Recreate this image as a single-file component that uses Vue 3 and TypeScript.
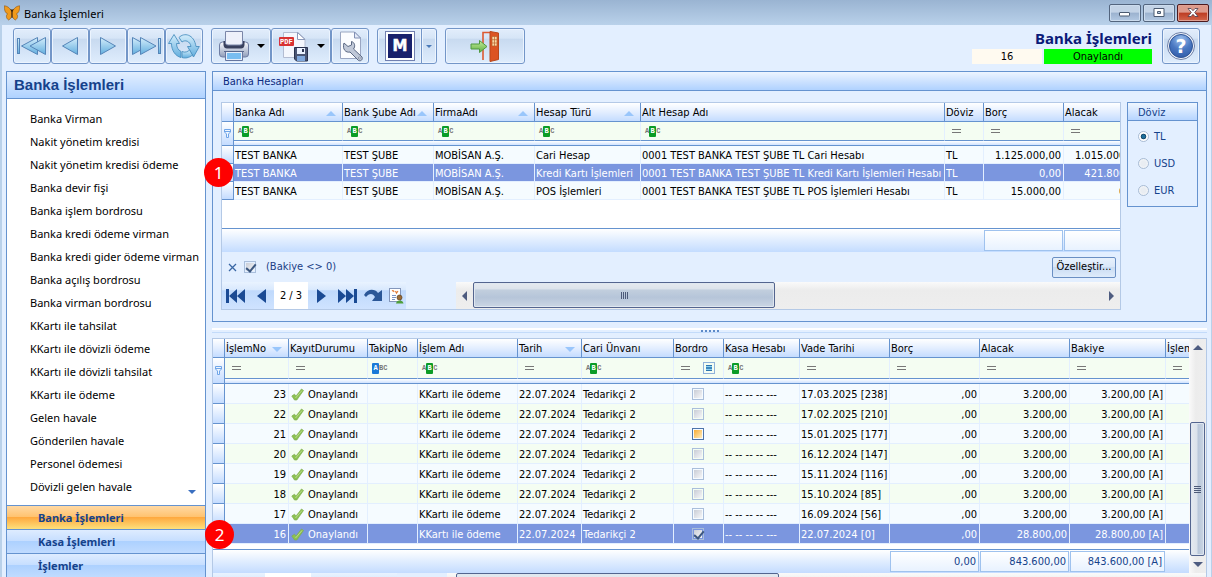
<script setup lang="ts">
import { ref } from 'vue'

type Sort = 'up' | 'down'
type Filter = 'abc' | 'starts' | 'eq'

interface Column {
  title: string
  width: number
  filter: Filter
  sort?: Sort
  numeric?: boolean
  check?: boolean
}

interface Movement {
  no: number
  due: string
  credit: string
  balance: string
}

const menuItems: string[] = [
  'Banka Virman',
  'Nakit yönetim kredisi',
  'Nakit yönetim kredisi ödeme',
  'Banka devir fişi',
  'Banka işlem bordrosu',
  'Banka kredi ödeme virman',
  'Banka kredi gider ödeme virman',
  'Banka açılış bordrosu',
  'Banka virman bordrosu',
  'KKartı ile tahsilat',
  'KKartı ile dövizli ödeme',
  'KKartı ile dövizli tahsilat',
  'KKartı ile ödeme',
  'Gelen havale',
  'Gönderilen havale',
  'Personel ödemesi',
  'Dövizli gelen havale',
]
const groups: string[] = ['Banka İşlemleri', 'Kasa İşlemleri', 'İşlemler']
const activeGroup = ref('Banka İşlemleri')

const accountColumns: Column[] = [
  { title: 'Banka Adı', width: 109, filter: 'abc', sort: 'up' },
  { title: 'Bank Şube Adı', width: 91, filter: 'abc', sort: 'up' },
  { title: 'FirmaAdı', width: 101, filter: 'abc', sort: 'up' },
  { title: 'Hesap Türü', width: 106, filter: 'abc', sort: 'up' },
  { title: 'Alt Hesap Adı', width: 304, filter: 'abc' },
  { title: 'Döviz', width: 39, filter: 'eq' },
  { title: 'Borç', width: 80, filter: 'eq', numeric: true },
  { title: 'Alacak', width: 80, filter: 'eq', numeric: true },
]
const accounts: string[][] = [
  ['TEST BANKA', 'TEST ŞUBE', 'MOBİSAN A.Ş.', 'Cari Hesap', '0001 TEST BANKA TEST ŞUBE TL Cari Hesabı', 'TL', '1.125.000,00', '1.015.000,00'],
  ['TEST BANKA', 'TEST ŞUBE', 'MOBİSAN A.Ş.', 'Kredi Kartı İşlemleri', '0001 TEST BANKA TEST ŞUBE TL Kredi Kartı İşlemleri Hesabı', 'TL', '0,00', '421.800,00'],
  ['TEST BANKA', 'TEST ŞUBE', 'MOBİSAN A.Ş.', 'POS İşlemleri', '0001 TEST BANKA TEST ŞUBE TL POS İşlemleri Hesabı', 'TL', '15.000,00', '0,00'],
]
const selectedAccount = ref(1)

const moveColumns: Column[] = [
  { title: 'İşlemNo', width: 64, filter: 'eq', sort: 'down' },
  { title: 'KayıtDurumu', width: 79, filter: 'eq' },
  { title: 'TakipNo', width: 50, filter: 'starts' },
  { title: 'İşlem Adı', width: 100, filter: 'abc' },
  { title: 'Tarih', width: 64, filter: 'eq', sort: 'down' },
  { title: 'Cari Ünvanı', width: 92, filter: 'abc' },
  { title: 'Bordro', width: 50, filter: 'eq', check: true },
  { title: 'Kasa Hesabı', width: 76, filter: 'abc' },
  { title: 'Vade Tarihi', width: 90, filter: 'eq' },
  { title: 'Borç', width: 90, filter: 'eq' },
  { title: 'Alacak', width: 90, filter: 'eq' },
  { title: 'Bakiye', width: 96, filter: 'eq' },
  { title: 'İşlem Türü', width: 80, filter: 'eq' },
]
const movements: Movement[] = [
  { no: 23, due: '17.03.2025 [238]', credit: '3.200,00', balance: '3.200,00 [A]' },
  { no: 22, due: '17.02.2025 [210]', credit: '3.200,00', balance: '3.200,00 [A]' },
  { no: 21, due: '15.01.2025 [177]', credit: '3.200,00', balance: '3.200,00 [A]' },
  { no: 20, due: '16.12.2024 [147]', credit: '3.200,00', balance: '3.200,00 [A]' },
  { no: 19, due: '15.11.2024 [116]', credit: '3.200,00', balance: '3.200,00 [A]' },
  { no: 18, due: '15.10.2024 [85]', credit: '3.200,00', balance: '3.200,00 [A]' },
  { no: 17, due: '16.09.2024 [56]', credit: '3.200,00', balance: '3.200,00 [A]' },
  { no: 16, due: '22.07.2024 [0]', credit: '28.800,00', balance: '28.800,00 [A]' },
]
const selectedMove = ref(16)

const currencies: string[] = ['TL', 'USD', 'EUR']
const currency = ref('TL')
</script>

<template>
  <div class="window">
    <svg class="defs" width="0" height="0" aria-hidden="true">
      <defs>
        <linearGradient id="gArrow" x1="0" y1="0" x2="0" y2="1">
          <stop offset="0" stop-color="#d4edfb" /><stop offset="1" stop-color="#62aede" />
        </linearGradient>
        <linearGradient id="gSteel" x1="0" y1="0" x2="0" y2="1">
          <stop offset="0" stop-color="#fbfcff" /><stop offset="1" stop-color="#8f9dba" />
        </linearGradient>
        <radialGradient id="gHelp" cx="0.5" cy="0.2" r="0.9">
          <stop offset="0" stop-color="#9cc0ee" /><stop offset="0.5" stop-color="#4a78c2" /><stop offset="1" stop-color="#2c56a4" />
        </radialGradient>
        <linearGradient id="gGreen" x1="0" y1="0" x2="0" y2="1">
          <stop offset="0" stop-color="#c5ec9a" /><stop offset="1" stop-color="#5fb043" />
        </linearGradient>
        <symbol id="tick" viewBox="0 0 13 13">
          <path d="M.8 8 L3.500 6.200 L5 8 L10.500 1 L12.500 2.500 L5.800 12 L3.500 12 Z" fill="#8cc152" stroke="#7fae50" stroke-width=".7" />
          <path d="M4.500 10 L11 2.500" stroke="#b9dc88" stroke-width="1" />
        </symbol>
        <symbol id="funnel" viewBox="0 0 9 11">
          <path d="M1.500 1.500 H7.500 V4 L5.500 6 V9.500 H3.500 V6 L1.500 4 Z M1.500 3.500 H7.500" fill="#eef6ff" stroke="#6fa5e8" />
        </symbol>
      </defs>
    </svg>

    <header class="titlebar">
      <svg width="16" height="16" viewBox="0 0 16 16" aria-hidden="true">
        <path d="M8 8 C7 4 4 1 .3 .8 C.3 5 1 8 3.600 8.800 C1.800 10 2 13.500 4.600 15 C7 14 7.800 11.500 8 9 Z" fill="#f09a1c" stroke="#7d4408" stroke-width=".5" />
        <path d="M8 8 C9 4 12 1 15.700 .8 C15.700 5 15 8 12.400 8.800 C14.200 10 14 13.500 11.400 15 C9 14 8.200 11.500 8 9 Z" fill="#f09a1c" stroke="#7d4408" stroke-width=".5" />
        <path d="M8 6 V13 M8 6.500 L6.800 4 M8 6.500 L9.200 4" stroke="#3d2306" stroke-width="1" fill="none" />
      </svg>
      <span class="caption">Banka İşlemleri</span>
      <div class="winbuttons">
        <button type="button" aria-label="Simge durumuna küçült">
          <svg width="12" height="9" viewBox="0 0 12 9"><rect x=".5" y="4.500" width="10" height="3.500" rx=".5" fill="#fff" stroke="#4a5a70" /></svg>
        </button>
        <button type="button" aria-label="Ekranı kapla">
          <svg width="12" height="9" viewBox="0 0 12 9"><path d="M1 .5 H11 V8.500 H1 Z M4.500 3.500 V5.500 H7.500 V3.500 Z" fill="#fff" fill-rule="evenodd" stroke="#4a5a70" /></svg>
        </button>
        <button type="button" class="close" aria-label="Kapat">
          <svg width="12" height="9" viewBox="0 0 12 9"><path d="M1 .5 H4 L6 2.700 L8 .5 H11 L7.700 4.500 L11 8.500 H8 L6 6.300 L4 8.500 H1 L4.300 4.500 Z" fill="#fff" stroke="#4b3a4a" stroke-width=".8" /></svg>
        </button>
      </div>
    </header>

    <div class="content">
      <div class="toolbar">
        <div class="btngroup">
          <button type="button" class="tool" aria-label="İlk kayıt">
            <svg width="30" height="20" viewBox="0 0 30 20" fill="url(#gArrow)" stroke="#5585b8">
              <rect x=".5" y="2.500" width="2" height="15" /><path d="M20.500 1.500 V18.500 L4.500 10 Z" /><path d="M28.500 1.500 V18.500 L13 10 Z" />
            </svg>
          </button>
          <button type="button" class="tool" aria-label="Önceki kayıt">
            <svg width="18" height="20" viewBox="0 0 18 20" fill="url(#gArrow)" stroke="#5585b8"><path d="M16.500 1.500 V18.500 L1.500 10 Z" /></svg>
          </button>
          <button type="button" class="tool" aria-label="Sonraki kayıt">
            <svg width="18" height="20" viewBox="0 0 18 20" fill="url(#gArrow)" stroke="#5585b8"><path d="M1.500 1.500 V18.500 L16.500 10 Z" /></svg>
          </button>
          <button type="button" class="tool" aria-label="Son kayıt">
            <svg width="30" height="20" viewBox="0 0 30 20" fill="url(#gArrow)" stroke="#5585b8">
              <path d="M1.500 1.500 V18.500 L17 10 Z" /><path d="M9.500 1.500 V18.500 L25 10 Z" /><rect x="27.500" y="2.500" width="2" height="15" />
            </svg>
          </button>
          <button type="button" class="tool" aria-label="Yenile">
            <svg width="32" height="26" viewBox="0 0 32 26" fill="url(#gArrow)" stroke="#4a90c0" stroke-width=".9">
              <path d="M6 1.500 L11.500 10.500 H8.500 C8.500 14 10 17 13 18.500 V24.500 C7 23 3.500 17 3.500 10.500 H.5 Z" />
              <path d="M11 4.500 C16 -.8 26 1 28 13.500 H31.300 L25.500 24 L19.500 13.500 H23 C22 8 17 6.500 14 9 Z" />
              <path d="M14 18.500 C17 20 20 18.500 21.500 17 L24.500 22 C21 25 17 25.500 14 24.500 Z" />
            </svg>
          </button>
        </div>

        <div class="btngroup">
          <button type="button" class="tool wide" aria-label="Yazdır">
            <svg width="32" height="30" viewBox="0 0 32 30">
              <rect x="1.500" y="11" width="29" height="15" rx="3" fill="url(#gSteel)" stroke="#6f7ea4" />
              <path d="M5.500 10 H26.500 V14 Q26 17.500 23 17.500 H9 Q6 17.500 5.500 14 Z" fill="#39415e" />
              <path d="M7.500 .5 H24.500 V12 Q24.500 14 22 14 H10 Q7.500 14 7.500 12 Z" fill="#eef1fa" stroke="#7a86a8" />
              <path d="M6 20.500 H26" stroke="#59688e" />
              <rect x="8.500" y="21.500" width="15" height="7" fill="#79bdf0" stroke="#e6eefa" />
              <path d="M7.500 21 V29.500 H24.500 V21" fill="none" stroke="#6676a0" />
            </svg>
            <i class="drop"></i>
          </button>
          <button type="button" class="tool wide" aria-label="PDF olarak kaydet">
            <svg width="32" height="32" viewBox="0 0 32 32">
              <path d="M5.500 2.500 H20 L27 9 V27.500 H5.500 Z" fill="#f4f7fd" stroke="#b3bdd2" /><path d="M19.500 2.500 V9.500 H27 Z" fill="#fff" stroke="#8a99ba" />
              <rect x="1" y="7" width="15" height="9" rx="1" fill="#d83232" /><text x="2" y="14" font-size="7" font-weight="700" fill="#fff" class="mono">PDF</text>
              <path d="M16.500 17.500 H29.500 V31 H18.500 L16.500 29 Z" fill="#4a5674" stroke="#29334f" /><rect x="19" y="18" width="8" height="6" fill="#eaf2ff" /><rect x="19" y="26" width="8" height="5" fill="#7fa8dd" /><rect x="24" y="19" width="2" height="3" fill="#29334f" />
            </svg>
            <i class="drop"></i>
          </button>
          <button type="button" class="tool" aria-label="Tasarım">
            <svg width="26" height="32" viewBox="0 0 26 32">
              <path d="M3.500 2 H17.500 L23.500 8 V28.500 H3.500 Z" fill="#fbfcff" stroke="#9aa6c2" /><path d="M17.500 2 V8 H23.500 Z" fill="#e4eaf8" stroke="#8290b4" />
              <path d="M7 13 L11 16.500 L14.500 15 L14.500 11.500 C18 12.500 18.500 16.500 16.500 19 L25 27 C26 29.500 24 31.500 21.500 30.500 L13 22 C9 23 5 19.500 7 13 Z" fill="#c0c8d8" stroke="#5b6883" />
              <circle cx="22.300" cy="28" r="1" fill="#fff" stroke="#5b6883" stroke-width=".6" />
            </svg>
          </button>
        </div>

        <div class="btngroup">
          <button type="button" class="tool brand" aria-label="M">
            <svg width="30" height="30" viewBox="0 0 30 30"><rect x=".5" y=".5" width="29" height="29" fill="#fff" stroke="#7180b0" /><rect x="3" y="3" width="24" height="24" fill="#19216c" /><text x="15" y="20" text-anchor="middle" font-size="15" font-weight="700" fill="#fff" stroke="#fff" stroke-width=".5" class="sansbold">M</text></svg>
          </button>
          <button type="button" class="tool slim" aria-label="Seçenekler"><i class="drop small"></i></button>
        </div>

        <div class="btngroup">
          <button type="button" class="tool exit" aria-label="Çıkış">
            <svg width="30" height="32" viewBox="0 0 30 32">
              <path d="M13 30 V2.500 H22" fill="none" stroke="#dc5a33" stroke-width="1.600" />
              <path d="M20 1.500 L28.500 3 V29.500 L20 31.500 Z" fill="#dc5423" stroke="#b9471c" />
              <path d="M22 6.500 H27 V16 H22 Z M24.500 6.500 V16 M22 9.700 H27 M22 13 H27" fill="#fbd9a6" stroke="#b9622c" stroke-width=".7" />
              <path d="M1 14 H9.500 V10.500 L17 16.500 L9.500 22.500 V19 H1 Z" fill="url(#gGreen)" stroke="#4f9a40" />
            </svg>
          </button>
        </div>

        <div class="status">
          <strong>Banka İşlemleri</strong>
          <div class="fields">
            <input class="recno" type="text" value="16" aria-label="Kayıt no" readonly />
            <output class="state">Onaylandı</output>
          </div>
        </div>
        <button type="button" class="tool help" aria-label="Yardım">
          <svg width="30" height="30" viewBox="0 0 30 30">
            <circle cx="15" cy="15" r="13.500" fill="#f2f5fb" stroke="#6d7fa6" /><circle cx="15" cy="15" r="11.500" fill="url(#gHelp)" stroke="#2f5596" />
            <text x="15" y="22" text-anchor="middle" font-size="19" font-weight="700" fill="#fff" class="sansbold">?</text>
          </svg>
        </button>
      </div>

      <div class="body">
        <aside class="sidebar">
          <h2>Banka İşlemleri</h2>
          <nav>
            <a v-for="item in menuItems" :key="item" href="#">{{ item }}</a>
            <i class="more"></i>
          </nav>
          <button
            v-for="group in groups" :key="group" type="button" class="group"
            :class="{ active: group === activeGroup }" @click="activeGroup = group"
          >{{ group }}</button>
        </aside>

        <main>
          <section class="panel">
            <h3>Banka Hesapları</h3>
            <div class="panelbody">
              <div class="gridwrap">
                <div class="grid">
                  <div class="clip">
                    <table class="accounts">
                      <colgroup><col class="ind" /><col v-for="c in accountColumns" :key="c.title" :style="{ width: c.width + 'px' }" /></colgroup>
                      <thead>
                        <tr>
                          <td class="mark"></td>
                          <th v-for="c in accountColumns" :key="c.title" scope="col">
                            <div class="head"><span>{{ c.title }}</span><i v-if="c.sort" :class="['sort', c.sort]"></i></div>
                          </th>
                        </tr>
                        <tr class="filter">
                          <td class="mark" rowspan="2"><svg width="9" height="11"><use href="#funnel" /></svg></td>
                          <td v-for="c in accountColumns" :key="c.title">
                            <span v-if="c.filter === 'abc'" class="abc"><b>A</b><b class="green">B</b><b>C</b></span>
                            <i v-else class="eq"></i>
                          </td>
                        </tr>
                        <tr class="band"><td :colspan="accountColumns.length"></td></tr>
                      </thead>
                      <tbody>
                        <tr v-for="(row, r) in accounts" :key="r" :class="{ selected: r === selectedAccount }" @click="selectedAccount = r">
                          <td class="mark"></td>
                          <td v-for="(cell, c) in row" :key="c" :class="{ num: accountColumns[c].numeric }">{{ cell }}</td>
                        </tr>
                      </tbody>
                    </table>
                    <div class="blank tall"></div>
                    <table class="foot">
                      <colgroup><col class="ind" /><col v-for="c in accountColumns" :key="c.title" :style="{ width: c.width + 'px' }" /></colgroup>
                      <tbody><tr><td colspan="7"></td><td><div class="sum"></div></td><td><div class="sum"></div></td></tr></tbody>
                    </table>
                  </div>
                  <div class="filterbar">
                    <button type="button" class="plain" aria-label="Filtreyi kaldır"><svg width="9" height="9" viewBox="0 0 9 9"><path d="M1 1 L8 8 M8 1 L1 8" stroke="#3a67a5" stroke-width="1.300" /></svg></button>
                    <label><input type="checkbox" class="box" checked /> <span>(Bakiye &lt;&gt; 0)</span></label>
                    <button type="button" class="customize">Özelleştir...</button>
                  </div>
                  <div class="pager">
                    <div class="pagebtns">
                      <button type="button" class="plain w26" aria-label="İlk"><svg width="19" height="14" viewBox="0 0 19 14"><path d="M0 0 H3 V14 H0 Z M11 0 V14 L3 7 Z M19 0 V14 L11 7 Z" fill="#1a4a94" /></svg></button>
                      <button type="button" class="plain w26" aria-label="Önceki"><svg width="9" height="14" viewBox="0 0 9 14"><path d="M9 0 V14 L0 7 Z" fill="#1a4a94" /></svg></button>
                      <output>2 / 3</output>
                      <button type="button" class="plain w26" aria-label="Sonraki"><svg width="9" height="14" viewBox="0 0 9 14"><path d="M0 0 V14 L9 7 Z" fill="#1a4a94" /></svg></button>
                      <button type="button" class="plain w26" aria-label="Son"><svg width="19" height="14" viewBox="0 0 19 14"><path d="M0 0 V14 L8 7 Z M8 0 V14 L16 7 Z M16 0 H19 V14 H16 Z" fill="#1a4a94" /></svg></button>
                      <button type="button" class="plain w26" aria-label="Git"><svg width="19" height="13" viewBox="0 0 19 13"><path d="M0 6 C4 -1 11 0 14 4 L18 1 V12 H8 L11 8 C9 4 5 4 2 8 Z" fill="#2b5797" /></svg></button>
                      <button type="button" class="plain w20" aria-label="Kart"><svg width="15" height="16" viewBox="0 0 15 16"><rect x=".5" y=".5" width="11" height="13" fill="#fff" stroke="#8497bb" /><path d="M3 3 Q4.500 2 5 4 M6.500 3 L7.500 5 L9 3" stroke="#e07834" fill="none" stroke-width="1.200" /><path d="M3 7.500 H7 M3 9.500 H7 M3 11.500 H6" stroke="#7b93c4" /><circle cx="10.500" cy="9.500" r="2.500" fill="#9a6a35" stroke="#5c3f20" stroke-width=".7" /><path d="M7 15.500 Q7.500 12.500 10.500 12.500 Q14 12.500 14.500 15.500 Z" fill="#4f9f3b" /></svg></button>
                    </div>
                    <div class="hscroll">
                      <button type="button" class="plain" aria-label="Sola kaydır"><i class="tri left"></i></button>
                      <div class="track"><div class="hthumb"><i></i><i></i><i></i><i></i></div></div>
                      <button type="button" class="plain" aria-label="Sağa kaydır"><i class="tri right"></i></button>
                    </div>
                  </div>
                </div>
                <span class="step one">1</span>
              </div>

              <fieldset class="currency">
                <legend>Döviz</legend>
                <label v-for="c in currencies" :key="c"><input v-model="currency" type="radio" name="currency" :value="c" /> {{ c }}</label>
              </fieldset>
            </div>
          </section>

          <div class="splitter"><i v-for="n in 5" :key="n"></i></div>

          <div class="gridwrap lower">
            <div class="grid moves-grid">
              <div class="scrollrow">
                <div class="clip">
                  <table class="moves">
                    <colgroup><col class="ind" /><col v-for="c in moveColumns" :key="c.title" :style="{ width: c.width + 'px' }" /></colgroup>
                    <thead>
                      <tr>
                        <td class="mark"></td>
                        <th v-for="c in moveColumns" :key="c.title" scope="col">
                          <div class="head"><span>{{ c.title }}</span><i v-if="c.sort" :class="['sort', c.sort]"></i></div>
                        </th>
                      </tr>
                      <tr class="filter">
                        <td class="mark" rowspan="2"><svg width="9" height="11"><use href="#funnel" /></svg></td>
                        <td v-for="c in moveColumns" :key="c.title">
                          <div class="filtercell">
                            <span v-if="c.filter === 'abc'" class="abc"><b>A</b><b class="green">B</b><b>C</b></span>
                            <span v-else-if="c.filter === 'starts'" class="abc"><b class="blue">A</b><b>B</b><b>C</b></span>
                            <i v-else class="eq"></i>
                            <input v-if="c.check" type="checkbox" class="box mixed" aria-label="Bordro filtresi" />
                          </div>
                        </td>
                      </tr>
                      <tr class="band"><td :colspan="moveColumns.length"></td></tr>
                    </thead>
                    <tbody>
                      <tr v-for="m in movements" :key="m.no" :class="{ selected: m.no === selectedMove }" @click="selectedMove = m.no">
                        <td class="mark"></td>
                        <td class="num">{{ m.no }}</td>
                        <td><div class="state-cell"><svg width="13" height="13"><use href="#tick" /></svg>Onaylandı</div></td>
                        <td></td>
                        <td>KKartı ile ödeme</td>
                        <td>22.07.2024</td>
                        <td>Tedarikçi 2</td>
                        <td class="mid"><input type="checkbox" class="box" :class="{ hot: m.no === 21 }" :checked="m.no === 16" aria-label="Bordro" /></td>
                        <td>-- -- -- -- ---</td>
                        <td>{{ m.due }}</td>
                        <td class="num">,00</td>
                        <td class="num">{{ m.credit }}</td>
                        <td class="num">{{ m.balance }}</td>
                        <td></td>
                      </tr>
                    </tbody>
                  </table>
                  <div class="blank short"></div>
                  <table class="foot">
                    <colgroup><col class="ind" /><col v-for="c in moveColumns" :key="c.title" :style="{ width: c.width + 'px' }" /></colgroup>
                    <tbody>
                      <tr>
                        <td colspan="10"></td>
                        <td><div class="sum">0,00</div></td>
                        <td><div class="sum">843.600,00</div></td>
                        <td><div class="sum">843.600,00 [A]</div></td>
                        <td></td>
                      </tr>
                    </tbody>
                  </table>
                </div>
                <div class="vscroll">
                  <button type="button" class="plain" aria-label="Yukarı kaydır"><i class="tri up"></i></button>
                  <div class="vtrack"><div class="vthumb"><i></i><i></i><i></i><i></i></div></div>
                  <button type="button" class="plain" aria-label="Aşağı kaydır"><i class="tri down"></i></button>
                </div>
              </div>
              <div class="pager">
                <div class="pagebtns"><span class="w52"></span><output class="w46"></output></div>
                <div class="hscroll"><span class="w9"></span><div class="track"><div class="hthumb long"></div></div></div>
              </div>
            </div>
            <span class="step two">2</span>
          </div>
        </main>
      </div>
    </div>
  </div>
</template>

<style>
body {
  margin: 0;
  overflow: hidden;
}
</style>

<style scoped>
* {
  box-sizing: border-box;
}
.window {
  height: 100vh;
  display: flex;
  flex-direction: column;
  overflow: hidden;
  background: #e3efff;
  color: #000;
  font: 11px/14px 'DejaVu Sans Condensed', 'DejaVu Sans', sans-serif;
}
button,
input {
  font: inherit;
  margin: 0;
}
.defs {
  position: absolute;
}
.mono {
  font-family: 'Liberation Mono', monospace;
}
.sansbold {
  font-family: 'DejaVu Sans', sans-serif;
}
.titlebar {
  flex: none;
  height: 25px;
  display: flex;
  align-items: center;
  padding: 0 3px 0 4px;
  gap: 4px;
  background: linear-gradient(#9ab4d2, #b9d1ea);
}
.caption {
  font: 11px/16px 'Noto Sans', sans-serif;
  flex: 1;
  padding-top: 2px;
}
.winbuttons {
  display: flex;
  gap: 2px;
}
.winbuttons button {
  width: 32px;
  height: 18px;
  padding: 0;
  display: flex;
  align-items: center;
  justify-content: center;
  border: 1px solid #53657e;
  border-radius: 2px;
  box-shadow: inset 0 0 0 1px #ccdcee;
  background: linear-gradient(#c3d3e6 45%, #9bb2cf 50%, #b3c9e3);
}
.winbuttons .close {
  border-color: #4c1a1e;
  box-shadow: inset 0 0 0 1px #e0a193;
  background: linear-gradient(#dd9a8b 45%, #bd3c22 50%, #d2674c);
}
.content {
  flex: 1;
  min-height: 0;
  display: flex;
  flex-direction: column;
  border: solid #b9d1ea;
  border-width: 0 1px 0 2px;
}
.toolbar {
  flex: none;
  height: 46px;
  display: flex;
  align-items: flex-start;
  gap: 8px;
  padding: 3px 11px 0 11px;
}
.btngroup {
  display: flex;
}
.tool {
  width: 38px;
  height: 36px;
  padding: 0;
  display: flex;
  align-items: center;
  justify-content: center;
  gap: 7px;
  border: 1px solid #7396c8;
  border-radius: 3px;
  background: linear-gradient(#e2edfb, #d6e5f7 27%, #c8daf0 30%, #dfedfd);
  box-shadow: inset 0 0 0 1px #ecf4fe;
}
.tool.wide {
  width: 60px;
}
.tool.brand {
  width: 45px;
  border-radius: 3px 0 0 3px;
}
.tool.slim {
  width: 16px;
  margin-left: -1px;
  border-radius: 0 3px 3px 0;
}
.tool.exit {
  width: 80px;
}
.drop {
  border: 4px solid transparent;
  border-top-color: #000;
  border-bottom: 0;
}
.drop.small {
  border-width: 3px 3px 0;
  border-top-color: #4a7ab8;
}
.status {
  margin-left: auto;
  display: flex;
  flex-direction: column;
  align-items: flex-end;
}
.status strong {
  font: 700 15px/21px 'Noto Sans', sans-serif;
  color: #0a1a78;
}
.fields {
  display: flex;
  gap: 2px;
}
.recno {
  width: 70px;
  height: 15px;
  border: 0;
  padding: 0;
  text-align: center;
  background: #fffaf0;
}
.state {
  width: 108px;
  height: 15px;
  line-height: 16px;
  text-align: center;
  background: #0f0;
}
.help {
  margin-left: 2px;
}

.body {
  flex: 1;
  min-height: 0;
  display: flex;
  gap: 6px;
  padding: 0 4px;
}
.sidebar {
  flex: none;
  width: 200px;
  display: flex;
  flex-direction: column;
  border: 1px solid #6593cf;
  border-bottom: 0;
  background: #fff;
}
.sidebar h2 {
  margin: 0;
  height: 27px;
  padding-left: 7px;
  font: 700 15px/26px 'Liberation Sans', Arial, sans-serif;
  color: #15428b;
  border-bottom: 1px solid #6593cf;
  background: linear-gradient(#e3efff, #afd2ff);
}
.sidebar nav {
  flex: 1;
  min-height: 0;
  overflow: hidden;
  position: relative;
  padding: 8px 0 0 23px;
}
.sidebar nav a {
  display: block;
  font: 11px/23px 'Noto Sans', sans-serif;
  color: #000;
  text-decoration: none;
  white-space: nowrap;
}
.more {
  position: absolute;
  right: 9px;
  bottom: 11px;
  border: 4px solid transparent;
  border-top-color: #3a6fc0;
  border-bottom: 0;
}
.group {
  flex: none;
  height: 24px;
  padding: 0 0 0 31px;
  text-align: left;
  font: 700 11px/22px 'Noto Sans', sans-serif;
  color: #15428b;
  border: 0;
  border-top: 1px solid #6593cf;
  background: linear-gradient(#deecff, #c6deff 48%, #add1ff 50%, #c0dbff);
}
.group.active {
  background: linear-gradient(#ffd9a4, #ffc26e 48%, #fea93f 50%, #fde07c);
}

main {
  flex: 1;
  min-width: 0;
  display: flex;
  flex-direction: column;
}
.panel {
  flex: none;
  border: 1px solid #6593cf;
}
.panel h3 {
  margin: 0;
  height: 19px;
  padding-left: 10px;
  font: 11px/19px 'DejaVu Sans Condensed', sans-serif;
  color: #0a2a80;
  border-bottom: 1px solid #6593cf;
  background: linear-gradient(#edf5ff, #c8dfff 60%, #b0d2ff);
}
.panelbody {
  display: flex;
  align-items: flex-start;
  gap: 6px;
  padding: 11px 8px;
}
.gridwrap {
  position: relative;
  flex: 1;
  min-width: 0;
}
.grid {
  border: 1px solid #b4c9e6;
}
.clip {
  overflow: hidden;
  flex: 1;
  min-width: 0;
  background: #fff;
}
table {
  width: 0;
  min-width: 100%;
  table-layout: fixed;
  border-collapse: separate;
  border-spacing: 0;
}
.ind {
  width: 12px;
}
th,
td {
  padding: 2px 2px 0 1px;
  height: 18px;
  line-height: 14px;
  white-space: nowrap;
  overflow: hidden;
  text-align: left;
  font-weight: 400;
  border: solid #e3efff;
  border-width: 0 1px 1px 0;
}
th,
thead .mark {
  height: 19px;
  border-color: #6593cf;
  background: linear-gradient(#fff, #e3eeff 50%, #c4dcff);
}
.mark,
thead .filter .mark {
  padding: 0;
  text-align: center;
  border-color: #6593cf;
  background: linear-gradient(#fff, #c4dcff);
}
.mark svg {
  display: block;
  margin: auto;
}
.head {
  display: flex;
  align-items: center;
}
.head span {
  flex: 1;
}
.sort {
  margin-right: 4px;
  border: 5px solid transparent;
}
.sort.up {
  border-top: 0;
  border-bottom-color: #99c6fb;
}
.sort.down {
  border-bottom: 0;
  border-top-color: #99c6fb;
}
.filter td {
  height: 19px;
  background: #f4fdf2;
  border-bottom-color: #6593cf;
  padding: 0 4px;
}
.band td {
  height: 5px;
  padding: 0;
  border-right: 0;
  border-bottom-color: #6593cf;
  background: linear-gradient(#fff, #cfe2ff);
}
.moves .filter td {
  height: 21px;
}
.moves .band td {
  height: 5px;
}
.abc {
  display: flex;
  align-items: center;
  height: 11px;
}
.abc b {
  font: 700 7px/11px 'Liberation Mono', monospace;
  color: #777;
}
.abc .green,
.abc .blue {
  width: 7px;
  text-align: center;
  color: #fff;
  background: #0b9c26;
  border-radius: 1px;
}
.abc .blue {
  background: #1a7ad8;
}
.eq {
  display: block;
  width: 9px;
  height: 4px;
  margin-left: 3px;
  border: solid #777;
  border-width: 1px 0;
}
.filtercell {
  display: flex;
  align-items: center;
}
.filtercell .box {
  margin-left: auto;
  margin-right: 4px;
}
tbody td {
  background: #f5fbff;
}
.moves tbody td {
  height: 20px;
}
.moves tbody tr:nth-child(even) td {
  background: #f4fdf2;
}
tbody tr td.mark,
.moves tbody tr:nth-child(even) td.mark {
  background: linear-gradient(#fff, #c4dcff);
}
tbody tr.selected td:not(.mark),
.moves tbody tr.selected:nth-child(even) td:not(.mark) {
  color: #fff;
  background: #7b96df;
}
.num {
  text-align: right;
}
td.mid {
  padding-top: 1px;
  text-align: center;
}
.state-cell {
  display: flex;
  align-items: center;
  gap: 4px;
  padding-left: 1px;
}
.blank {
  border-bottom: 1px solid #6593cf;
}
.blank.tall {
  height: 29px;
}
.blank.short {
  height: 6px;
}
.foot td,
.foot tr td {
  height: 23px;
  padding: 0;
  border: 0;
  background: none;
}
.foot {
  background: linear-gradient(#fff, #e0edff 50%, #c4dcff);
}
.sum {
  height: 21px;
  margin-right: 1px;
  padding-right: 2px;
  line-height: 20px;
  text-align: right;
  color: #15428b;
  border: 1px solid #9fc2ee;
  background: linear-gradient(#fff, #e8f2ff);
}

.box {
  appearance: none;
  display: block;
  position: relative;
  width: 12px;
  height: 12px;
  border: 1px solid #a9bedb;
  background: linear-gradient(135deg, #c9cdd6, #f6f7f9) content-box #fff;
  padding: 1px;
}
.mid .box {
  margin: 0 auto;
}
.box:checked::after {
  content: '';
  position: absolute;
  left: 3px;
  top: 0;
  width: 4px;
  height: 8px;
  border: solid #3c577f;
  border-width: 0 2px 2px 0;
  transform: rotate(40deg);
}
.box.hot {
  border-color: #4d74ab;
  background: linear-gradient(135deg, #f9ad35, #ffedc0) content-box #fff;
}
.box.mixed {
  border-color: #8fb2da;
  padding: 2px;
  background: linear-gradient(#2d76ae 15%, #8fd0f0 15% 40%, #3b88bd 40% 60%, #8fd0f0 60% 85%, #2d76ae 85%) content-box #fff;
}
.filterbar {
  height: 30px;
  display: flex;
  align-items: center;
  gap: 7px;
  padding: 0 4px 0 6px;
  color: #1c3f86;
}
.filterbar label {
  display: flex;
  align-items: center;
  gap: 10px;
}
.customize {
  margin-left: auto;
  width: 64px;
  height: 21px;
  padding: 0;
  white-space: nowrap;
  border: 1px solid #6a8fc3;
  border-radius: 2px;
  background: linear-gradient(#e8f1fc, #d9e7f8 48%, #cadcf2 50%, #deebfb);
}
.plain {
  display: flex;
  align-items: center;
  justify-content: center;
  padding: 0;
  border: 0;
  background: none;
}
.filterbar .plain {
  width: 9px;
}
.pager {
  height: 27px;
  display: flex;
}
.pagebtns {
  display: flex;
  width: 184px;
  flex: none;
  background: linear-gradient(#e9f3ff, #d8e8fd 30%, #bfd9fc 32%, #cfe3ff);
}
.pagebtns output {
  width: 34px;
  line-height: 27px;
  text-align: center;
  background: #fff;
}
.w26 {
  width: 26px;
}
.w20 {
  width: 20px;
}
.w52 {
  width: 52px;
}
.w9 {
  width: 9px;
}
.pagebtns .w46 {
  width: 46px;
}
.hscroll {
  flex: 1;
  margin-left: 50px;
  display: flex;
  background: linear-gradient(#fafafa, #ececec 30%, #eee);
}
.hscroll .plain {
  width: 17px;
}
.track {
  flex: 1;
  display: flex;
}
.hthumb {
  width: 48%;
  height: 26px;
  display: flex;
  align-items: center;
  justify-content: center;
  gap: 1px;
  border: 1px solid #54658f;
  border-radius: 2px;
  box-shadow: inset 0 0 0 1px #dfe7f0;
  background: linear-gradient(#e6eaef, #dbe2eb 26%, #c2cfde 28%, #b6c5d9 60%, #cbd6e4);
}
.hthumb i {
  width: 1px;
  height: 7px;
  background: #4d5a78;
}
.tri {
  border: 5px solid transparent;
}
.tri.left {
  border-left: 0;
  border-right-color: #4e5c80;
}
.tri.right {
  border-right: 0;
  border-left-color: #4e5c80;
}
.tri.up {
  border-top: 0;
  border-bottom-color: #4e5c80;
}
.tri.down {
  border-bottom: 0;
  border-top-color: #4e5c80;
}
.currency {
  margin: 0;
  padding: 0;
  width: 71px;
  min-width: 0;
  height: 105px;
  border: 1px solid #6593cf;
  color: #15428b;
}
.currency legend {
  float: left;
  width: 100%;
  height: 18px;
  padding: 0 10px;
  line-height: 19px;
  border-bottom: 1px solid #6593cf;
  background: linear-gradient(#f0f7ff, #b6d5ff);
  margin-bottom: 2px;
}
.currency label {
  clear: both;
  height: 27px;
  display: flex;
  align-items: center;
  gap: 5px;
  padding-left: 10px;
}
.currency input {
  appearance: none;
  width: 11px;
  height: 11px;
  border: 1px solid #a9bcd4;
  border-radius: 50%;
  background: radial-gradient(#e9edf2 40%, #fff);
}
.currency input:checked {
  background: radial-gradient(#1d6f9c 25%, #14405f 38%, #fff 50%);
}
.splitter {
  flex: none;
  height: 5px;
  margin: 6px 0 5px;
  display: flex;
  justify-content: center;
  align-items: center;
  gap: 2px;
  border-top: 2px solid #fff;
  border-bottom: 1px solid #c3dbfa;
}
.splitter i {
  width: 2px;
  height: 2px;
  background: #5d8ac8;
}
.lower {
  min-height: 0;
}
.moves-grid {
  border-bottom: 0;
}
.scrollrow {
  display: flex;
}
.vscroll {
  flex: none;
  width: 17px;
  padding-left: 1px;
  display: flex;
  flex-direction: column;
  background: linear-gradient(90deg, #fafafa, #ececec 40%, #eee);
}
.vscroll .plain {
  height: 17px;
}
.vtrack {
  flex: 1;
  display: flex;
  flex-direction: column;
  justify-content: flex-end;
}
.vthumb {
  height: 67%;
  width: 15px;
  display: flex;
  flex-direction: column;
  align-items: center;
  justify-content: center;
  gap: 1px;
  border: 1px solid #54658f;
  border-radius: 2px;
  box-shadow: inset 0 0 0 1px #dfe7f0;
  background: linear-gradient(90deg, #e6eaef, #dbe2eb 45%, #b9c7da 55%, #cbd6e4);
}
.vthumb i {
  width: 7px;
  height: 1px;
  background: #4d5a78;
}
.hthumb.long {
  width: 43%;
}
.step {
  position: absolute;
  left: -17px;
  width: 29px;
  height: 29px;
  border-radius: 50%;
  background: #f00;
  color: #fff;
  font: 17px/29px 'Noto Sans', sans-serif;
  text-align: center;
}
.step.one {
  top: 56px;
}
.step.two {
  left: -7px;
  top: 182px;
}
</style>
